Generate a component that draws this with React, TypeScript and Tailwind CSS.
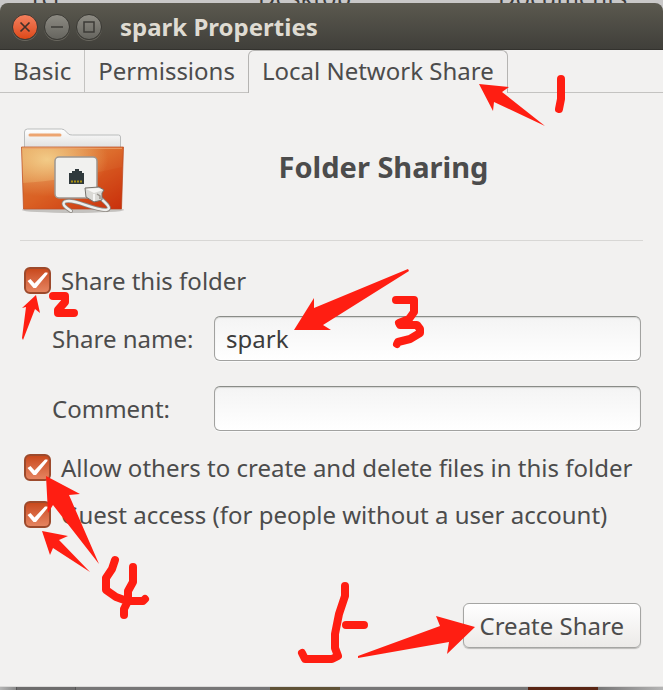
import React from 'react';

const RED = '#ff1e12';

const fieldClass = "h-[45px] min-w-0 flex-1 rounded-md border border-[#a2a2a0] border-t-[#8a8c88] bg-gradient-to-b from-[#f4f4f4] to-white px-[11px] text-[#3c3c3c] shadow-[inset_0_1px_1px_#d5d5d3,0_1px_0_#fafafa] focus:outline-none";

const windowButtonClass = "flex size-[26px] items-center justify-center rounded-full border border-[#3a3934] bg-gradient-to-b from-[#8d8b83] to-[#66655f] shadow-[0_1px_0_#69675f]";

const TitleBar = () => {
    return (
        <header className="flex h-[47px] items-center gap-1.5 rounded-t-lg border-b border-[#33322e] bg-gradient-to-b from-[#5b594f] to-[#403f3a] pt-px pl-3">
            <button aria-label="Close" className="flex size-[26px] items-center justify-center rounded-full border border-[#3a3934] bg-gradient-to-b from-[#f37f5c] to-[#dd4814] shadow-[0_1px_0_#69675f]">
                <svg viewBox="0 0 24 24" className="size-6" fill="none" stroke="#42302a" strokeWidth="1.7">
                    <path d="M7.5 7.5l9 9M16.5 7.5l-9 9" />
                </svg>
            </button>
            <button aria-label="Minimize" className={windowButtonClass}>
                <svg viewBox="0 0 24 24" className="size-6" fill="none" stroke="#3c3b37" strokeWidth="1.5">
                    <path d="M6 12h12" />
                </svg>
            </button>
            <button aria-label="Maximize" className={windowButtonClass}>
                <svg viewBox="0 0 24 24" className="size-6" fill="none" stroke="#3c3b37" strokeWidth="1.5">
                    <path d="M7 7h10v10h-10z" />
                </svg>
            </button>
            <h1 className="pl-3 text-2xl font-bold text-[#dfdbd2]">spark Properties</h1>
        </header>
    )
}

const FolderIcon = () => {
    return (
        <svg viewBox="0 0 108 88" className="h-[88px] w-[108px] shrink-0" fill="none">
            <defs>
                <linearGradient id="folder" x1="0" y1="0" x2="1" y2="1">
                    <stop offset="0" stopColor="#e29a50" />
                    <stop offset="0.5" stopColor="#dc6a2b" />
                    <stop offset="1" stopColor="#c5290b" />
                </linearGradient>
                <radialGradient id="glow" cx="0.25" cy="0.2" r="0.6">
                    <stop offset="0" stopColor="#f2cb87" />
                    <stop offset="1" stopColor="#f2cb87" stopOpacity="0" />
                </radialGradient>
                <linearGradient id="paper" x1="0" y1="0" x2="0" y2="1">
                    <stop offset="0" stopColor="#fff" />
                    <stop offset="1" stopColor="#dededd" />
                </linearGradient>
            </defs>
            <ellipse cx="53" cy="83" rx="51" ry="3" fill="#c4c2bf" />
            <path d="M4.500 22V5q0-3 3-3h34q3 0 5 3l2 2q1 1 4 1h46q2 0 2 2v12z" fill="url(#paper)" stroke="#babcbc" />
            <path d="M10 8h30" stroke="#eda571" strokeWidth="3" strokeLinecap="round" />
            <path d="M1.500 20h102l-2 62h-98z" fill="url(#folder)" />
            <path d="M1.500 20h102l-2 62h-98z" fill="url(#glow)" />
            <path d="M3 56Q42 54 102 40V81H4z" fill="#d5400b" fillOpacity="0.25" />
            <path d="M1.500 20h102l-2 62h-98z" stroke="#b9461c" strokeOpacity="0.7" />
            <path d="M3 21.300h99" stroke="#eda36d" />
            <rect x="35" y="30" width="42" height="41" rx="4" fill="#f1f1ef" stroke="#9c9791" strokeWidth="1.500" />
            <path d="M49 46h3v-2h3v-2h4v2h3v2h2v11H49z" fill="#2f393c" />
            <path d="M51 54.500h12" stroke="#a89013" strokeWidth="2" strokeDasharray="2 1" />
            <path d="M51 84C46 81 41 77 45 74.500C54 71 70 82 86 83C93 82 86 76 78 69" stroke="#8d8781" strokeWidth="4" strokeLinecap="round" />
            <path d="M51 84C46 81 41 77 45 74.500C54 71 70 82 86 83C93 82 86 76 78 69" stroke="#eeeeec" strokeWidth="2.400" strokeLinecap="round" />
            <path d="M65 61l14-1 5 3-2 3v7l-8 2-8-5z" fill="#dadad6" stroke="#77736d" />
            <path d="M66 62l8 4 9-3-5-2z" fill="#f6f6f4" />
            <path d="M74 67v7" stroke="#fff" strokeWidth="1.500" />
            <path d="M77 67l3 2v3" stroke="#99958f" strokeWidth="1.500" />
        </svg>
    )
}

const CheckRow = ({ label }: { label: string }) => {
    return (
        <label className="flex h-[47px] items-center gap-2.5 whitespace-nowrap">
            <span className="grid size-[27px] shrink-0">
                <input type="checkbox" defaultChecked className="col-start-1 row-start-1 appearance-none rounded-md border-2 border-[#9c4a2c] bg-gradient-to-b from-[#c9491b] to-[#e58460]" />
                <svg viewBox="0 0 27 27" className="pointer-events-none col-start-1 row-start-1 size-[27px]">
                    <path d="M3.500 14l3-2 4 4.500L21 5.500h2.500v1.500L12 21h-2.500z" fill="#fff" />
                </svg>
            </span>
            {label}
        </label>
    )
}

// freehand marker notes, drawn on top of the dialog
const Markers = () => {
    return (
        <svg viewBox="0 0 663 690" className="pointer-events-none absolute top-0 left-0 h-[690px] w-[663px]" aria-hidden="true">
            <g fill={RED}>
                <path d="M479 84l30 3-7 5 43 34-51-24-1 9z" />
                <path d="M36 295l4 18-5-4-12 31-1-2 4-31-4 1z" />
                <path d="M294 330l20-32v10l94-39 1 2-86 54 8 5z" />
                <path d="M46 476l34 18-11 1 30 69-46-59-5 8z" />
                <path d="M42 531l26 5-9 4 31 32-37-24-3 7z" />
                <path d="M475 627l-28 27 2-12-91 16v-2l82-30-4-10z" />
            </g>
            <g fill="none" stroke={RED} strokeWidth="8" strokeLinecap="round" strokeLinejoin="round">
                <path d="M561 79v20l-2 10" />
                <path d="M53 296h12v6l-7 8v3h16" />
                <path d="M396 300h18v12l-5 7-10 4 1 2h17l3 4v4l-10 6-12 3-1 2" />
                <path d="M115 560l-3 9-6 9v12l10 7 11 4h16l2-2M133 567v15l-5 9v10l-4 8v6" />
                <path d="M345 586v10l-6 18-4 20v14l3 8-6 3h-27l-3-6M346 625h18" />
            </g>
        </svg>
    )
}

const App = () => {
    return (
        <div className="relative overflow-hidden bg-[#c9c8c8] font-['Noto_Sans','Open_Sans',sans-serif] text-2xl text-[#4c4c4c]">
            <div className="flex h-[3px] items-end overflow-hidden pl-8 text-2xl leading-3 text-[#3c3c3c]" aria-hidden="true">
                <span className="w-[226px]">rcj</span>
                <span className="w-60">Desktop</span>
                <span>Documents</span>
            </div>
            <TitleBar />
            <main className="bg-[#f2f1f0]">
                <nav className="flex" role="tablist">
                    <button role="tab" className="border-r border-b border-[#c4c3c1] px-[13px] leading-10 whitespace-nowrap">Basic</button>
                    <button role="tab" className="border-b border-[#c4c3c1] px-[13px] leading-10 whitespace-nowrap">Permissions</button>
                    <button role="tab" aria-selected="true" className="rounded-t-md border border-b-0 border-[#b5b4b2] px-[13px] pb-0.5 leading-10 whitespace-nowrap">Local Network Share</button>
                    <span className="flex-1 border-b border-[#c4c3c1]"></span>
                </nav>
                <section className="px-5 pt-[34px] pb-[38px]">
                    <div className="flex items-center">
                        <FolderIcon />
                        <h2 className="flex-1 pr-1 pb-2 text-center text-[29px] font-bold">Folder Sharing</h2>
                    </div>
                    <hr className="mt-[25px] border-[#d8d7d5]" />
                    <form className="pt-4 pr-0.5">
                        <div className="px-1"><CheckRow label="Share this folder" /></div>
                        <div className="flex items-center pt-3 pl-8">
                            <label htmlFor="share-name" className="w-[162px]">Share name:</label>
                            <input id="share-name" defaultValue="spark" className={fieldClass} />
                        </div>
                        <div className="flex items-center pt-[25px] pl-8">
                            <label htmlFor="comment" className="w-[162px]">Comment:</label>
                            <input id="comment" className={fieldClass} />
                        </div>
                        <div className="px-1 pt-[13px]">
                            <CheckRow label="Allow others to create and delete files in this folder" />
                            <CheckRow label="Guest access (for people without a user account)" />
                        </div>
                        <div className="flex justify-end pt-[65px]">
                            <button type="button" className="h-[45px] rounded-md border border-[#a5a5a3] bg-gradient-to-b from-white to-[#eceae8] px-4 shadow-[0_1px_1px_#bcbbb9]">Create Share</button>
                        </div>
                    </form>
                </section>
            </main>
            <footer className="flex h-1 border-t border-[#dcdbda] bg-[#777676]">
                <span className="w-4 bg-gradient-to-r from-[#b5b5b5] to-[#8a8a8a]"></span>
                <span className="w-[60px] border-x border-[#555] bg-[#6d6c6c]"></span>
                <span className="flex-[194]"></span>
                <span className="w-[70px] bg-[#5f5236]"></span>
                <span className="flex-[188]"></span>
                <span className="w-[70px] bg-[#5a2614]"></span>
                <span className="flex-[65] bg-gradient-to-r from-[#777676] to-[#b5b5b5]"></span>
            </footer>
            <Markers />
        </div>
    )
}

export default App
